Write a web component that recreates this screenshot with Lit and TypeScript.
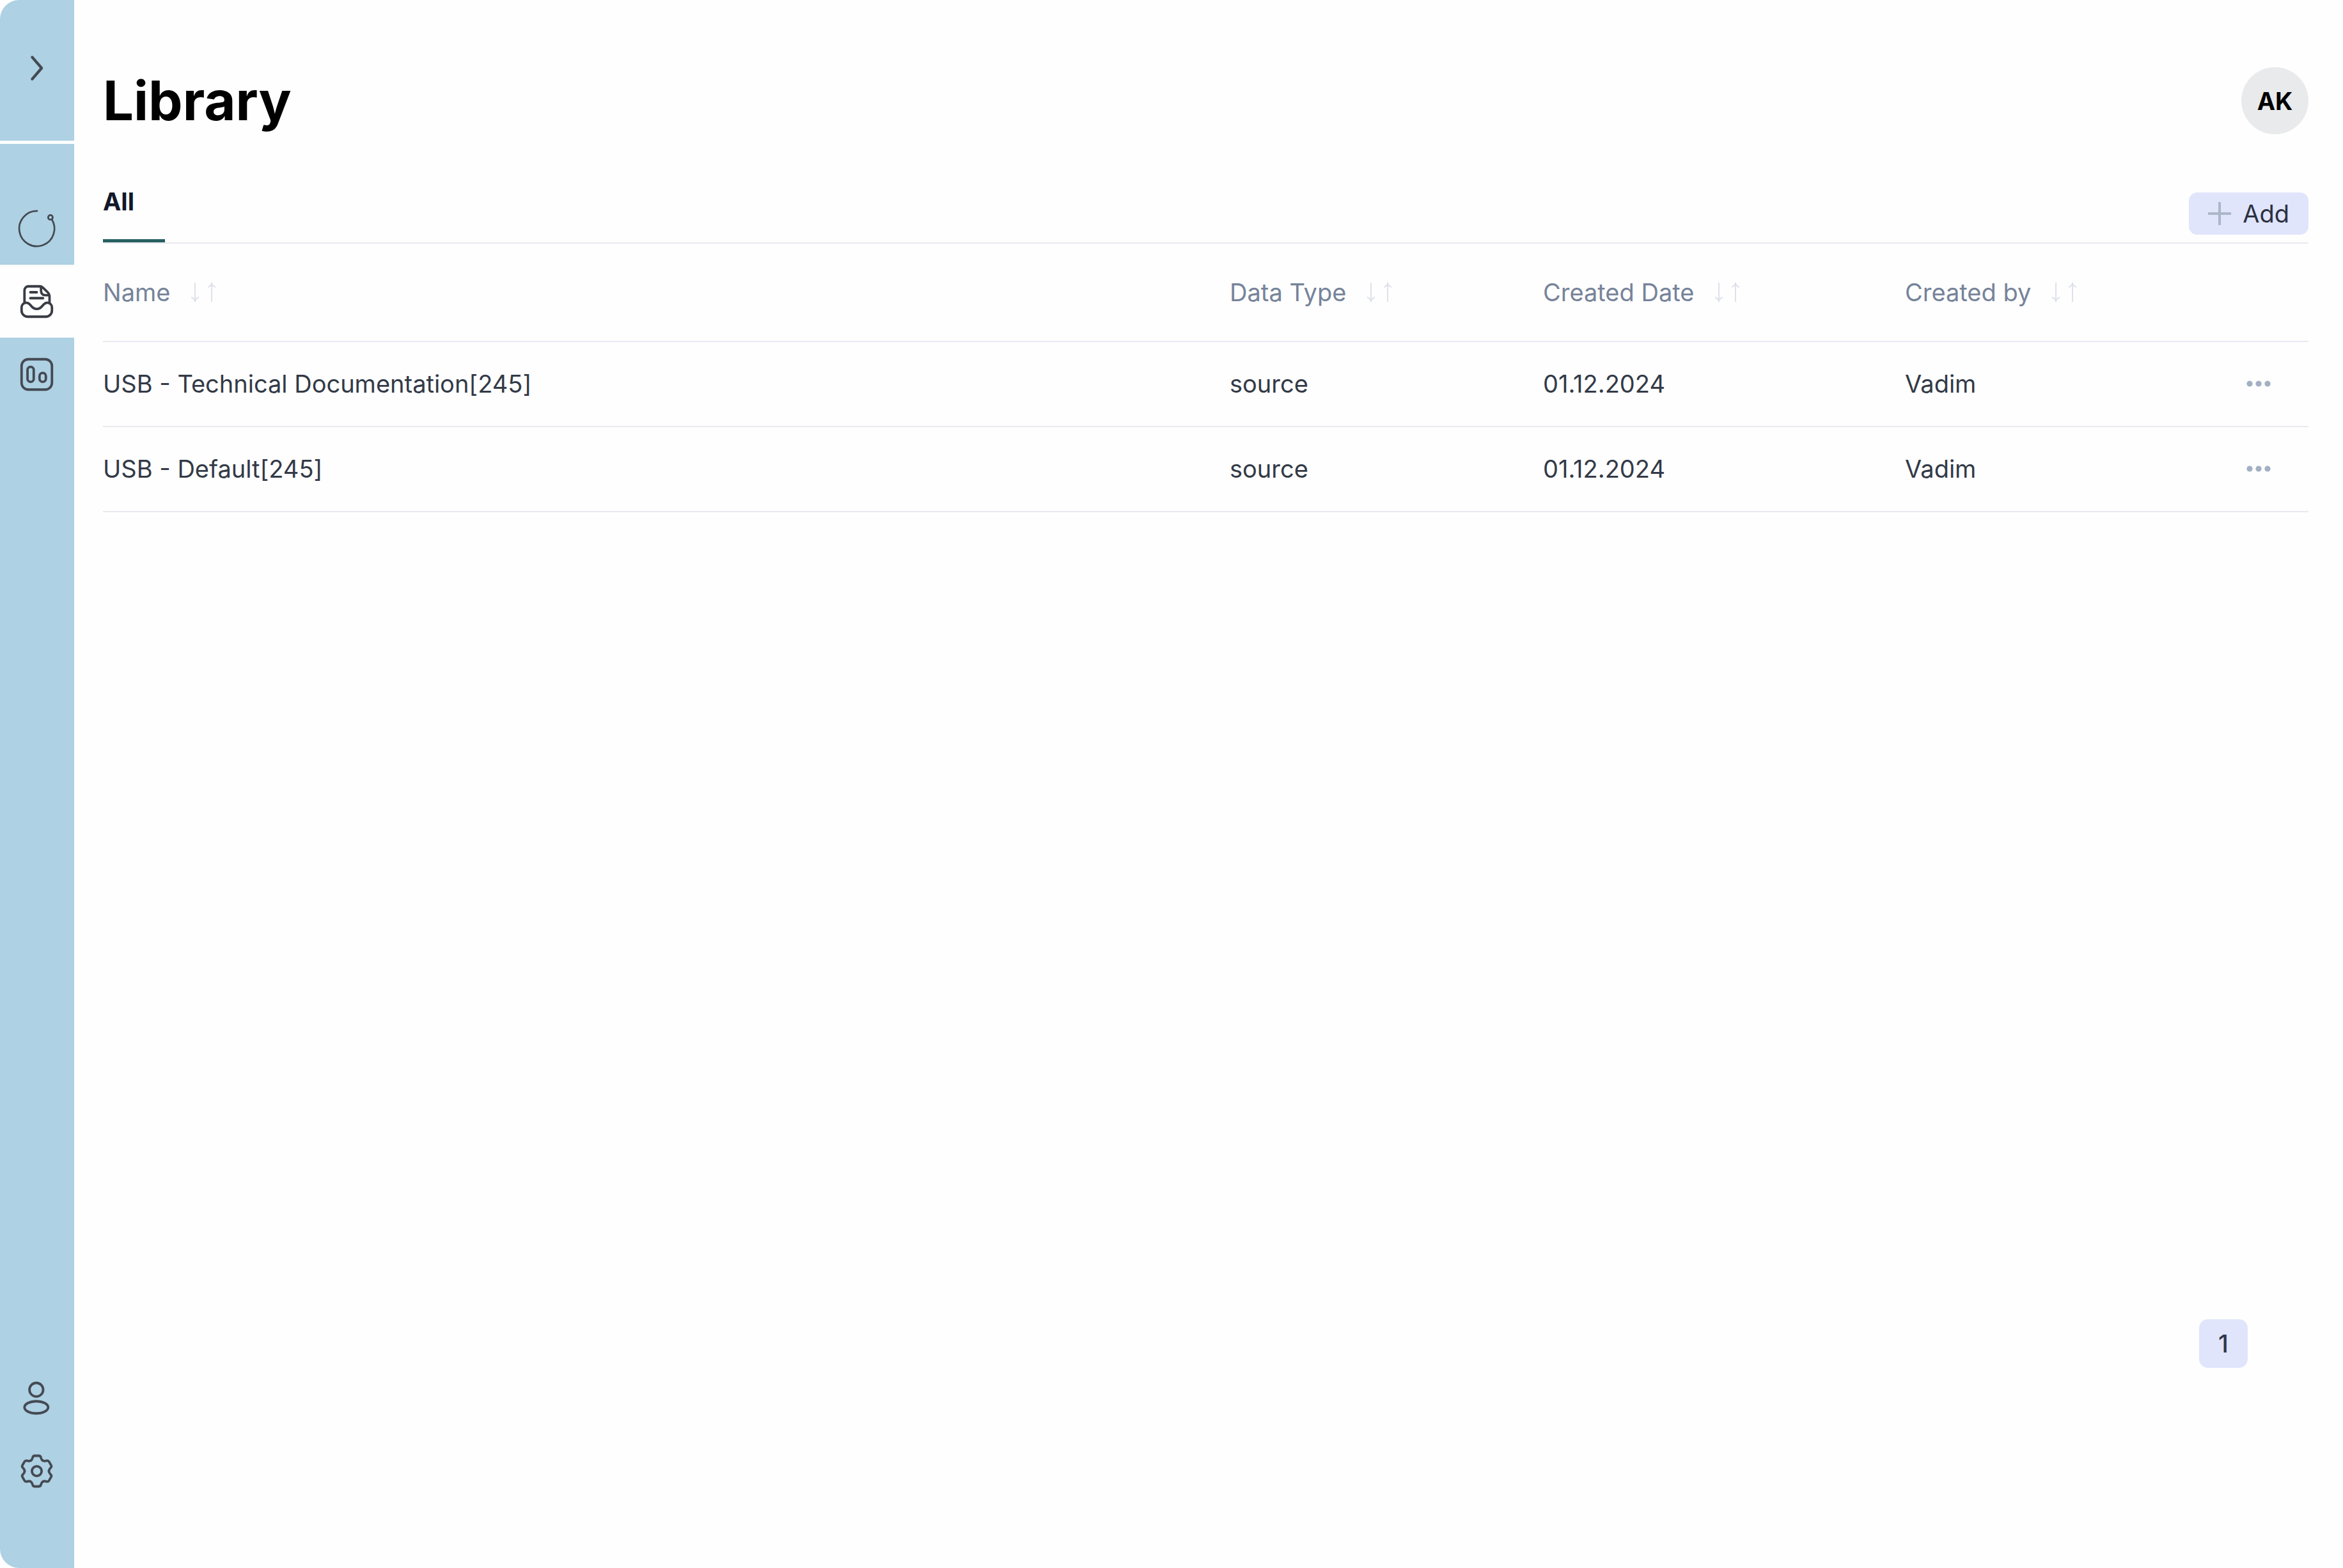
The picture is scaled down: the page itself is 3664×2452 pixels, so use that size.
import { LitElement, html, css, svg } from "lit";
import { customElement, property, state } from "lit/decorators.js";
import { classMap } from "lit/directives/class-map.js";

interface LibraryItem {
  name: string;
  type: string;
  created: string;
  author: string;
}

const ICONS = {
  chevron: svg`<path d="M9 4.8 15.2 12 9 19.2" stroke-width="1.8" />`,
  ring: svg`
    <path d="M12.2 0.4A11.6 11.6 0 1 0 21.9 5.9" stroke-width="1.15" />
    <circle cx="21" cy="4.6" r="1.5" stroke-width="1.15" />`,
  inbox: svg`
    <path d="M3.9 12.8V4.6A2.6 2.6 0 0 1 6.5 2H14c1.1 0 1.6.4 2.3 1.1l3 2.9c.7.7 1.1 1.4 1.1 2.4v4.4" />
    <path d="M14.8 2.2v2.6c0 2 1 3 3 3h2.3" />
    <path d="M7.8 5.9H12M7.8 9.8h8.3" stroke-width="1.7" />
    <path d="M5 12.8C8.4 12.8 8 16.9 12 16.9S15.6 12.8 19 12.8A3 3 0 0 1 22 15.8V18A4 4 0 0 1 18 22H6A4 4 0 0 1 2 18V15.8A3 3 0 0 1 5 12.8Z" />`,
  chart: svg`
    <rect x="2" y="2" width="20" height="20" rx="4.4" />
    <rect x="5.9" y="7" width="4.1" height="9.9" rx="2" />
    <rect x="13.8" y="11" width="4.2" height="5.9" rx="2.1" />`,
  user: svg`
    <circle cx="11.7" cy="6.4" r="4.5" />
    <ellipse cx="11.7" cy="18" rx="7.8" ry="4" />`,
  gear: svg`
    <circle cx="12" cy="12" r="3.2" />
    ${[0, 60, 120, 180, 240, 300].map(
      (angle) => svg`<path transform="rotate(${angle} 12 12)"
        d="M8 5.07C8.8 4.7 9 4.1 9.2 3.3C9.4 2.3 9.8 1.9 10.6 1.9H13.4C14.2 1.9 14.6 2.3 14.8 3.3C15 4.1 15.2 4.7 16 5.07" />`
    )}`,
};

type IconName = keyof typeof ICONS;

@customElement("nav-icon")
export class NavIcon extends LitElement {
  static styles = css`
    :host {
      display: block;
      width: 57px;
      height: 57px;
    }
    .icon {
      display: block;
      width: 100%;
      height: 100%;
      overflow: visible;
      fill: none;
      stroke: currentColor;
      stroke-width: 1.6;
      stroke-linecap: round;
      stroke-linejoin: round;
    }
  `;

  @property() name: IconName = "ring";

  render() {
    return html`<svg class="icon" viewBox="0 0 24 24" aria-hidden="true">${ICONS[this.name]}</svg>`;
  }
}

@customElement("side-nav")
export class SideNav extends LitElement {
  static styles = css`
    :host {
      display: flex;
      flex-direction: column;
      box-sizing: border-box;
      width: 116px;
      background: #aed1e3;
      border-radius: 30px 0 0 30px;
      color: #444a53;
    }
    .toggle {
      display: flex;
      align-items: center;
      justify-content: center;
      box-sizing: border-box;
      height: 225px;
      padding: 0 2px 8px 0;
      border: 0;
      border-bottom: 5px solid #fff;
      background: none;
      color: inherit;
      cursor: pointer;
    }
    .links {
      display: flex;
      flex: 1;
      flex-direction: column;
      padding: 75px 0 95px;
    }
    .spacer {
      flex: 1;
    }
    .link {
      display: flex;
      align-items: center;
      justify-content: center;
      height: 114px;
      padding-right: 2px;
      color: inherit;
    }
    .link.active {
      background: #fefefe;
      color: #3a3c44;
    }
  `;

  private link(icon: IconName, label: string, active = false) {
    return html`<a
      class=${classMap({ link: true, active })}
      href="#${label.toLowerCase()}"
      aria-label=${label}
      ><nav-icon name=${icon}></nav-icon
    ></a>`;
  }

  render() {
    return html`
      <button class="toggle" type="button" aria-label="Expand">
        <nav-icon name="chevron"></nav-icon>
      </button>
      <nav class="links">
        ${this.link("ring", "Assistant")} ${this.link("inbox", "Library", true)}
        ${this.link("chart", "Reports")}
        <span class="spacer"></span>
        ${this.link("user", "Profile")} ${this.link("gear", "Settings")}
      </nav>
    `;
  }
}

@customElement("library-table")
export class LibraryTable extends LitElement {
  static styles = css`
    :host {
      display: block;
    }
    .table {
      width: 100%;
      table-layout: fixed;
      border-collapse: separate;
      border-spacing: 0;
    }
    .head,
    .cell {
      padding: 0;
      border-bottom: 2px solid #e9e9f0;
      font-size: 38px;
      font-weight: 400;
      line-height: 46px;
      text-align: left;
      white-space: nowrap;
    }
    .head {
      height: 152px;
      color: #76839a;
    }
    .cell {
      height: 129px;
      padding-bottom: 2px;
      color: #333a47;
    }
    .type {
      width: 490px;
    }
    .date {
      width: 566px;
    }
    .author {
      width: 400px;
    }
    .actions {
      width: 231px;
    }
    .sort {
      display: flex;
      align-items: center;
      gap: 32px;
      padding: 0;
      border: 0;
      background: none;
      color: inherit;
      font: inherit;
      cursor: pointer;
    }
    .arrows {
      width: 40px;
      height: 32px;
      fill: none;
      stroke: #dfe2ea;
      stroke-width: 2;
    }
    .menu {
      display: flex;
      align-items: center;
      justify-content: center;
      width: 78px;
      height: 60px;
      margin-left: auto;
      margin-right: 39px;
      padding: 0;
      border: 0;
      background: none;
      cursor: pointer;
    }
    .dots {
      width: 38px;
      height: 10px;
      fill: #a3b0c4;
    }
  `;

  @property({ attribute: false }) items: LibraryItem[] = [];

  private heading(label: string, column: string) {
    return html`<th class="head ${column}" scope="col">
      <button class="sort" type="button">
        ${label}
        <svg class="arrows" viewBox="0 0 40 32" aria-hidden="true">
          <path d="M7 1V30M1 24C4 25 6 27 7 30C8 27 10 25 13 24" />
          <path d="M33 31V2M27 8C30 7 32 5 33 2C34 5 36 7 39 8" />
        </svg>
      </button>
    </th>`;
  }

  render() {
    return html`
      <table class="table">
        <thead>
          <tr>
            ${this.heading("Name", "name")} ${this.heading("Data Type", "type")}
            ${this.heading("Created Date", "date")} ${this.heading("Created by", "author")}
            <td class="head actions"></td>
          </tr>
        </thead>
        <tbody>
          ${this.items.map(
            (item) => html`<tr>
              <td class="cell">${item.name}</td>
              <td class="cell">${item.type}</td>
              <td class="cell">${item.created}</td>
              <td class="cell">${item.author}</td>
              <td class="cell">
                <button class="menu" type="button" aria-label="Actions">
                  <svg class="dots" viewBox="0 0 38 10" aria-hidden="true">
                    <circle cx="5" cy="5" r="4.6" />
                    <circle cx="19" cy="5" r="4.6" />
                    <circle cx="33" cy="5" r="4.6" />
                  </svg>
                </button>
              </td>
            </tr>`
          )}
        </tbody>
      </table>
    `;
  }
}

@customElement("app-root")
export class AppRoot extends LitElement {
  static styles = css`
    :host {
      display: flex;
      min-height: 100vh;
      background: #fefefe;
      font-family: Inter, "Liberation Sans", sans-serif;
    }
    .main {
      display: flex;
      flex: 1;
      flex-direction: column;
      min-width: 0;
      padding: 105px 54px 313px 45px;
    }
    .header {
      display: flex;
      align-items: center;
      justify-content: space-between;
    }
    .title {
      margin: 0;
      color: #000;
      font-size: 85px;
      font-weight: 700;
      line-height: 105px;
    }
    .avatar {
      width: 105px;
      height: 105px;
      padding: 0;
      border: 0;
      border-radius: 50%;
      background: #e9eaec;
      color: #000;
      font: inherit;
      font-size: 38px;
      font-weight: 700;
      cursor: pointer;
    }
    .toolbar {
      display: flex;
      align-items: flex-end;
      justify-content: space-between;
      margin-top: 82px;
      border-bottom: 2px solid #e9e9f0;
    }
    .tab {
      min-width: 97px;
      padding: 0 0 36px;
      border: 0;
      border-bottom: 5px solid #266061;
      background: none;
      color: #12182a;
      font: inherit;
      font-size: 38px;
      font-weight: 700;
      line-height: 46px;
      text-align: left;
      cursor: pointer;
    }
    .add {
      display: flex;
      align-items: center;
      gap: 18px;
      height: 66px;
      margin-bottom: 12px;
      padding: 0 30px;
      border: 0;
      border-radius: 13px;
      background: #e0e5fc;
      color: #2b3140;
      font: inherit;
      font-size: 38px;
      cursor: pointer;
    }
    .plus {
      width: 36px;
      height: 36px;
      stroke: #abb7c9;
      stroke-width: 4;
    }
    .pages {
      display: flex;
      justify-content: flex-end;
      margin-top: auto;
      padding-right: 95px;
    }
    .page {
      width: 76px;
      height: 76px;
      padding: 0;
      border: 0;
      border-radius: 14px;
      background: #e0e5fc;
      color: #2f3747;
      font: inherit;
      font-size: 38px;
      font-weight: 500;
      cursor: pointer;
    }
  `;

  @state() private items: LibraryItem[] = [
    { name: "USB - Technical Documentation[245]", type: "source", created: "01.12.2024", author: "Vadim" },
    { name: "USB - Default[245]", type: "source", created: "01.12.2024", author: "Vadim" },
  ];

  render() {
    return html`
      <side-nav></side-nav>
      <main class="main">
        <header class="header">
          <h1 class="title">Library</h1>
          <button class="avatar" type="button">AK</button>
        </header>
        <div class="toolbar">
          <div role="tablist">
            <button class="tab" type="button" role="tab" aria-selected="true">All</button>
          </div>
          <button class="add" type="button">
            <svg class="plus" viewBox="0 0 36 36" aria-hidden="true">
              <path d="M18 0V36M0 18H36" />
            </svg>
            Add
          </button>
        </div>
        <library-table .items=${this.items}></library-table>
        <nav class="pages" aria-label="Pagination">
          <button class="page" type="button" aria-current="page">1</button>
        </nav>
      </main>
    `;
  }
}
